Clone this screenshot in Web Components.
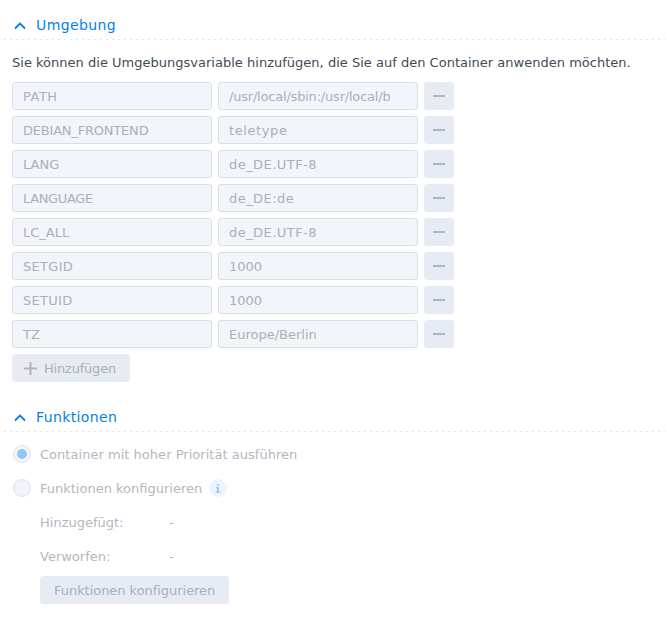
<!DOCTYPE html>
<html><head><meta charset="utf-8"><style>
html,body{margin:0;padding:0;background:#fff}
body{width:667px;height:622px;overflow:hidden;font:13px "DejaVu Sans",sans-serif;color:#414b55}
main{display:flex;flex-direction:column;padding:12px 2px 0 4px}
</style></head><body>
<main>
<app-section label="Umgebung">
  <p-text>Sie können die Umgebungsvariable hinzufügen, die Sie auf den Container anwenden möchten.</p-text>
  <env-row name="PATH" nls=".5" value="/usr/local/sbin:/usr/local/b" vls="-.2"></env-row>
  <env-row name="DEBIAN_FRONTEND" nls="-.2" value="teletype" vls=".6"></env-row>
  <env-row name="LANG" value="de_DE.UTF-8" vls=".45"></env-row>
  <env-row name="LANGUAGE" nls="-.35" value="de_DE:de" vls=".45"></env-row>
  <env-row name="LC_ALL" value="de_DE.UTF-8" vls=".45"></env-row>
  <env-row name="SETGID" nls=".3" value="1000"></env-row>
  <env-row name="SETUID" nls=".3" value="1000"></env-row>
  <env-row name="TZ" value="Europe/Berlin"></env-row>
  <flat-button plus>Hinzufügen</flat-button>
</app-section>
<app-section label="Funktionen" style="margin-top:22px">
  <radio-row checked ls=".03">Container mit hoher Priorität ausführen</radio-row>
  <radio-row info>Funktionen konfigurieren</radio-row>
  <kv-row key="Hinzugefügt:" val="-"></kv-row>
  <kv-row key="Verworfen:" val="-"></kv-row>
  <flat-button indent>Funktionen konfigurieren</flat-button>
</app-section>
</main>
<script>
function def(name,html){customElements.define(name,class extends HTMLElement{connectedCallback(){if(this.shadowRoot)return;const r=this.attachShadow({mode:'open'});r.innerHTML=typeof html==='function'?html(this):html;}});}
def('app-section',h=>`<style>
:host{display:block}
.head{display:flex;align-items:center;gap:10px;height:27px;padding-left:10px;color:#057feb;font-size:14px;line-height:27px;letter-spacing:.38px}
.rule{height:1px;background:repeating-linear-gradient(90deg,#dfe4ea 0 2px,transparent 2px 6px)}
svg{display:block;width:12px;height:8px}
.body{display:flex;flex-direction:column;padding:0 0 0 8px}
</style><div class="head"><svg viewBox="0 0 12 8" fill="none" stroke="#057feb" stroke-width="1.8"><path d="M1 6.500 6 1.500 11 6.500"/></svg><span>${h.getAttribute('label')}</span></div><div class="rule"></div><div class="body"><slot></slot></div>`);
def('p-text',`<style>:host{display:block;height:42px;line-height:45px;color:#414b55;font-size:13px;white-space:nowrap;letter-spacing:.012px}</style><slot></slot>`);
def('env-row',h=>`<style>
:host{display:flex;gap:6px;height:28px;margin-bottom:6px}
.f{box-sizing:border-box;width:200px;height:28px;border:1px solid #d5dfeb;border-radius:3px;background:#f3f5fa;color:#a9b0b7;padding:0 10px;line-height:28px;white-space:nowrap;overflow:hidden;font-size:13px}
.m{width:30px;height:28px;border-radius:3px;background:#e7ebf3;display:flex;align-items:center;justify-content:center}
.m i{display:block;width:12px;height:2px;background:#afb5bd}
</style><div class="f" style="letter-spacing:${h.getAttribute('nls')||0}px">${h.getAttribute('name')}</div><div class="f" style="letter-spacing:${h.getAttribute('vls')||0}px">${h.getAttribute('value')}</div><div class="m"><i></i></div>`);
def('flat-button',h=>`<style>
:host{display:flex;align-self:flex-start;height:28px;${h.hasAttribute('indent')?'margin:3px 0 0 28px;':''}}
.b{display:flex;align-items:center;height:28px;border-radius:3px;background:#e7ebf3;color:#a9b0b7;font-size:13px;padding:0 14px 0 ${h.hasAttribute('plus')?'12':'14'}px;gap:7px;white-space:nowrap;letter-spacing:${h.hasAttribute('plus')?'-.2':'-.04'}px}
svg{width:13px;height:13px;display:block}
</style><div class="b">${h.hasAttribute('plus')?'<svg viewBox="0 0 13 13" fill="#afb5bd"><path d="M5.500 0h2v5.500H13v2H7.500V13h-2V7.500H0v-2h5.500z"/></svg>':''}<span><slot></slot></span></div>`);
def('radio-row',h=>`<style>
:host{display:flex;align-items:center;height:34px;gap:9px;color:#b3b8be;font-size:13px;white-space:nowrap;padding-left:1px;letter-spacing:${h.getAttribute('ls')||0}px}
:host(:first-child){margin-top:5px}
.r{box-sizing:border-box;width:18px;height:18px;border:1px solid #dbe3ee;border-radius:50%;background:#f3f5fa;display:flex;align-items:center;justify-content:center}
.r i{display:block;width:10px;height:10px;border-radius:50%;background:#91c6f8}
.n{width:18px;height:18px;border-radius:50%;background:#ecf4fd;display:flex;align-items:center;justify-content:center;margin-left:-2px}
svg{width:6px;height:9px;display:block}
</style><div class="r">${h.hasAttribute('checked')?'<i></i>':''}</div><span><slot></slot></span>${h.hasAttribute('info')?'<div class="n"><svg viewBox="0 0 6 9" fill="#9fcdf8"><path d="M2 0h2v2H2zM1 3h3v4.500h1.500V9H.5V7.500H2V4.500H1z"/></svg></div>':''}`);
def('kv-row',h=>`<style>
:host{display:flex;align-items:center;height:34px;margin-left:28px;color:#b3b8be;font-size:13px;white-space:nowrap}
.k{width:129px}
</style><span class="k">${h.getAttribute('key')}</span><span>${h.getAttribute('val')}</span>`);
</script>
</body></html>
